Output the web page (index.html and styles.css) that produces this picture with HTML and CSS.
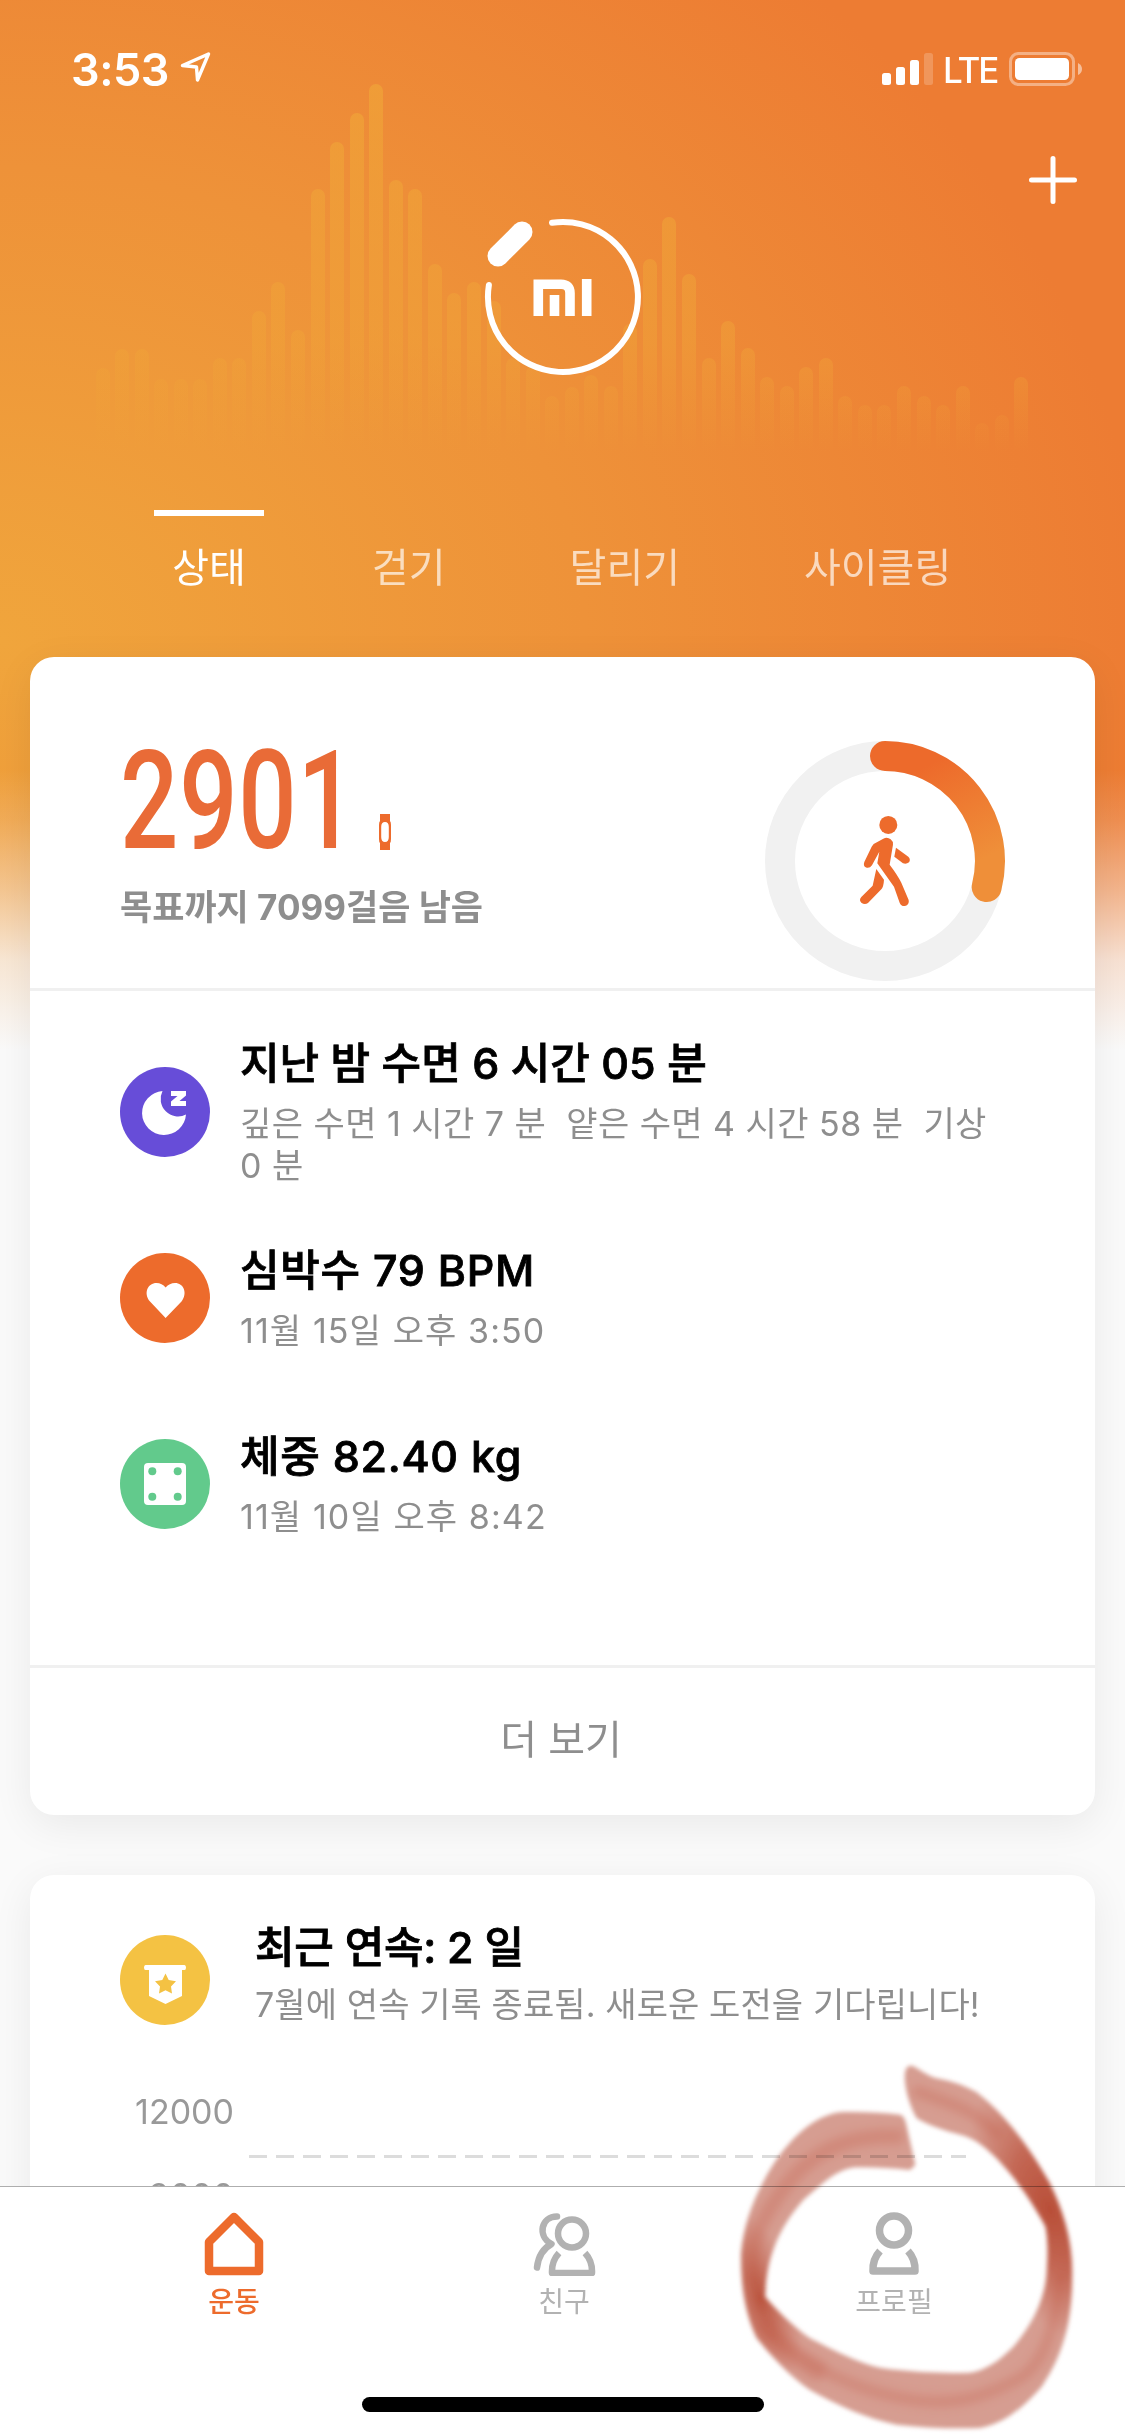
FILE: index.html
```html
<!DOCTYPE html>
<html lang="ko">
    <head>
        <meta charset="UTF-8">
        <meta name="viewport" content="width=device-width, initial-scale=1.0">
        <title>Mi Fit</title>
        <link rel="stylesheet" href="styles.css">
    </head>
    <body>
        <div class="screen">
            <div class="content">
                <svg class="bars" width="1125" height="460" viewBox="0 0 1125 460">
                    <defs>
                        <linearGradient id="barFade" gradientUnits="userSpaceOnUse" x1="0" y1="80" x2="0" y2="445">
                            <stop offset="0" stop-color="#f0a438" stop-opacity=".7"/>
                            <stop offset=".7" stop-color="#f0a438" stop-opacity=".45"/>
                            <stop offset="1" stop-color="#f0a438" stop-opacity="0"/>
                        </linearGradient>
                    </defs>
                    <path transform="translate(0 7)" fill="none" stroke="url(#barFade)" stroke-width="14" stroke-linecap="round" d="M103 368V445M122 349V445M142 349V445M161 379V445M181 379V445M200 379V445M220 358V445M239 358V445M259 311V445M278 282V445M298 330V445M318 189V445M337 142V445M357 113V445M376 84V445M396 180V445M415 189V445M435 264V445M454 293V445M474 282V445M494 301V445M513 358V445M533 366V445M552 396V445M572 387V445M591 375V445M611 386V445M630 324V445M650 259V445M669 217V445M689 274V445M709 358V445M728 321V445M748 348V445M767 377V445M787 386V445M806 367V445M826 358V445M845 396V445M865 405V445M884 405V445M904 386V445M924 396V445M943 405V445M963 386V445M982 423V445M1002 415V445M1021 377V445"/>
                </svg>

                <header class="header">
                    <div class="status">
                        <div class="status-left">
                            <span class="time">3:53</span>
                            <svg width="32" height="32" viewBox="0 0 32 32">
                                <path d="M2.5 13.5 28.5 2 17.5 28 16.5 15Z" fill="none" stroke="#fff" stroke-width="3.4" stroke-linejoin="round"/>
                            </svg>
                        </div>
                        <div class="status-right">
                            <svg width="52" height="34" viewBox="0 0 52 34" fill="#fff">
                                <rect x="0" y="21" width="9" height="12" rx="2.5"/>
                                <rect x="14" y="15" width="9" height="18" rx="2.5"/>
                                <rect x="28" y="8" width="9" height="25" rx="2.5"/>
                                <rect x="42" y="1" width="9" height="32" rx="2.5" opacity=".2"/>
                            </svg>
                            <span class="lte">LTE</span>
                            <svg width="74" height="34" viewBox="0 0 74 34">
                                <rect x="1.5" y="1.5" width="63" height="31" rx="8" fill="none" stroke="#fff" stroke-width="3" opacity=".4"/>
                                <rect x="6" y="6" width="54" height="22" rx="4.5" fill="#fff"/>
                                <path d="M69 11Q73 13 73 17Q73 21 69 23Z" fill="#fff" opacity=".5"/>
                            </svg>
                        </div>
                    </div>
                    <div class="add">
                        <svg width="48" height="48" viewBox="0 0 48 48">
                            <path d="M24 2.5V45.500M2.500 24H45.500" stroke="#fff" stroke-width="5" stroke-linecap="round"/>
                        </svg>
                    </div>
                    <div class="band">
                        <svg width="160" height="160" viewBox="0 0 160 160">
                            <path d="M69 5.800A75 75 0 1 1 5.900 68" fill="none" stroke="#fff" stroke-width="6" stroke-linecap="round"/>
                            <path d="M39 15 15 39" stroke="#fff" stroke-width="21" stroke-linecap="round"/>
                            <path d="M55.300 99V67.300H78Q87 67.300 87 76V99M71.500 78V99M103.700 62V99" fill="none" stroke="#fff" stroke-width="9.600"/>
                        </svg>
                    </div>
                    <nav class="tabs">
                        <span class="tab active">상태</span>
                        <span class="tab">걷기</span>
                        <span class="tab">달리기</span>
                        <span class="tab">사이클링</span>
                    </nav>
                </header>

                <section class="card">
                    <div class="summary">
                        <div>
                            <div class="steps">
                                <span class="count">2901</span>
                                <svg width="12" height="36" viewBox="0 0 12 36">
                                    <path fill="#ed6b2c" fill-rule="evenodd" d="M1 0H11V7Q12 8 12 11V25Q12 28 11 29V36H1V29Q0 28 0 25V11Q0 8 1 7ZM6 8Q2.200 8 2.200 13V23Q2.200 28 6 28Q9.800 28 9.800 23V13Q9.800 8 6 8Z"/>
                                </svg>
                            </div>
                            <p class="goal">목표까지 7099걸음 남음</p>
                        </div>
                        <svg class="progress" width="240" height="240" viewBox="0 0 240 240">
                            <defs>
                                <linearGradient id="ringFill" x1="0" y1="0" x2=".4" y2="1">
                                    <stop offset=".2" stop-color="#ed6a2b"/>
                                    <stop offset="1" stop-color="#ef8f39"/>
                                </linearGradient>
                            </defs>
                            <circle cx="120" cy="120" r="105" fill="none" stroke="#f1f1f1" stroke-width="30"/>
                            <path d="M120 15A105 105 0 0 1 221.700 146" fill="none" stroke="url(#ringFill)" stroke-width="30" stroke-linecap="round"/>
                            <g transform="translate(-65 -41) scale(.3333)" fill="#ed6b2c">
                                <circle cx="565" cy="375" r="27"/>
                                <path d="M521 432 550 416Q562 410 572 418Q580 424 579 434L569 494Q592 524 604 548L626 600Q629 614 615 618Q603 619 599 608L582 560 532 490 538 455 516 496Q508 507 497 502Q489 497 493 486L515 440Z"/>
                                <path d="M588 443 625 470Q633 478 627 487Q619 494 609 490L583 470Z"/>
                                <path d="M529 507 552 539Q551 560 544 568L504 609Q494 616 484 608Q476 600 484 591L518 557Z"/>
                            </g>
                        </svg>
                    </div>
                    <div class="records">
                        <div class="record">
                            <svg width="90" height="90" viewBox="0 0 90 90">
                                <circle cx="45" cy="45" r="45" fill="#674dd8"/>
                                <path fill="#fff" d="M42.500 24A22 22 0 1 0 66 47.500A17.500 17.500 0 0 1 42.500 24Z"/>
                                <path fill="#fff" d="M51 24H66V28.500L59.500 34H66V39H51V34.500L57.500 29H51Z"/>
                            </svg>
                            <div class="record-text">
                                <h2>지난 밤 수면 6 시간 05 분</h2>
                                <p>깊은 수면 1 시간 7 분&nbsp; 얕은 수면 4 시간 58 분&nbsp; 기상<br>0 분</p>
                            </div>
                        </div>
                        <div class="record">
                            <svg width="90" height="90" viewBox="0 0 90 90">
                                <circle cx="45" cy="45" r="45" fill="#ed6b2c"/>
                                <path fill="#fff" d="M45.600 65 30 48.500C23 40 28 30 36.500 30Q42 30 45.600 34.500Q49.500 30 55 30C63.500 30 68 40 61.500 48.500Z"/>
                            </svg>
                            <div class="record-text">
                                <h2 class="wide">심박수 79 BPM</h2>
                                <p class="wide">11월 15일 오후 3:50</p>
                            </div>
                        </div>
                        <div class="record">
                            <svg width="90" height="90" viewBox="0 0 90 90">
                                <circle cx="45" cy="45" r="45" fill="#62ca8c"/>
                                <rect x="24" y="24" width="42" height="42" rx="4" fill="#fff"/>
                                <g fill="#62ca8c">
                                    <circle cx="32.300" cy="32.300" r="4"/>
                                    <circle cx="57.700" cy="32.300" r="4"/>
                                    <circle cx="32.300" cy="57.700" r="4"/>
                                    <circle cx="57.700" cy="57.700" r="4"/>
                                </g>
                            </svg>
                            <div class="record-text">
                                <h2 class="wide">체중 82.40 kg</h2>
                                <p class="wide">11월 10일 오후 8:42</p>
                            </div>
                        </div>
                    </div>
                    <div class="more">더 보기</div>
                </section>

                <section class="card streak">
                    <div class="streak-head">
                        <svg width="90" height="90" viewBox="0 0 90 90">
                            <circle cx="45" cy="45" r="45" fill="#f4c243"/>
                            <path fill="#fff" d="M25.500 30H64.500Q66 30 66 32.500Q66 35 64.500 35H62V61L45.500 69 29 61V35H25.500Q24 35 24 32.500Q24 30 25.500 30Z"/>
                            <path fill="#f4c243" d="M45.500 38.500 48.700 45 56 46.200 51 51.500 52 58.500 45.500 55.300 39 58.500 40 51.500 35 46.200 42.300 45Z"/>
                        </svg>
                        <div class="record-text">
                            <h2>최근 연속: 2 일</h2>
                            <p>7월에 연속 기록 종료됨. 새로운 도전을 기다립니다!</p>
                        </div>
                    </div>
                    <div class="chart">
                        <div class="axis">
                            <span>12000</span>
                            <span>9000</span>
                        </div>
                        <svg class="grid-line" width="717" height="3">
                            <path d="M0 1.500H717" stroke="#dcdcdc" stroke-width="3" stroke-dasharray="18 9"/>
                        </svg>
                    </div>
                </section>
            </div>

            <footer class="tabbar">
                <nav class="menu">
                    <div class="menu-item selected">
                        <svg width="64" height="64" viewBox="0 0 64 64">
                            <path d="M32 5 57 30V59H7V30Z" fill="none" stroke="#ed6b2c" stroke-width="8.500" stroke-linejoin="round"/>
                        </svg>
                        <span>운동</span>
                    </div>
                    <div class="menu-item">
                        <svg width="64" height="64" viewBox="0 0 64 64" fill="none" stroke="#b2b2b2" stroke-width="6.500">
                            <circle cx="40" cy="21.500" r="14"/>
                            <path d="M27 41Q19.500 49 20 61H60Q60.500 49 53 41" stroke-linejoin="round"/>
                            <path d="M25 4.500C9 4.500 5 24 19.500 32C10 37 6 47 5 55.500" stroke-linecap="round" stroke-linejoin="round"/>
                        </svg>
                        <span>친구</span>
                    </div>
                    <div class="menu-item">
                        <svg width="64" height="64" viewBox="0 0 64 64" fill="none" stroke="#b2b2b2" stroke-width="7.500">
                            <circle cx="32" cy="18.500" r="14.500"/>
                            <path d="M18 39Q10.500 47 11 59H53Q53.500 47 46 39" stroke-linejoin="round"/>
                        </svg>
                        <span>프로필</span>
                    </div>
                </nav>
                <div class="home-bar"></div>
            </footer>

            <!-- marker circle around the profile tab -->
            <svg class="marker" width="445" height="396" viewBox="0 0 1335 1188">
                <defs>
                    <radialGradient id="darkRight" gradientUnits="userSpaceOnUse" cx="0" cy="0" r="1" gradientTransform="translate(1110 510) rotate(70) scale(420 210)">
                        <stop offset="0" stop-color="#b5452d" stop-opacity=".9"/>
                        <stop offset=".45" stop-color="#b94a33" stop-opacity=".65"/>
                        <stop offset="1" stop-color="#c05a45" stop-opacity="0"/>
                    </radialGradient>
                    <radialGradient id="darkLeft" gradientUnits="userSpaceOnUse" cx="0" cy="0" r="1" gradientTransform="translate(240 775) rotate(75) scale(260 110)">
                        <stop offset="0" stop-color="#b5452d" stop-opacity=".85"/>
                        <stop offset="1" stop-color="#c05a45" stop-opacity="0"/>
                    </radialGradient>
                    <filter id="soft"><feGaussianBlur stdDeviation="6"/></filter>
                    <filter id="softer"><feGaussianBlur stdDeviation="13"/></filter>
                    <path id="ribbon" d="M690 77C710 77 725 100 770 115C820 125 850 135 890 157C980 225 1060 340 1110 430C1150 510 1176 600 1177 690C1178 820 1160 930 1085 1040C1040 1090 980 1150 900 1164Q770 1168 650 1154C560 1135 480 1100 390 1050C330 1010 280 955 230 895C195 820 182 740 183 640C190 560 215 490 250 425C310 310 400 220 490 216Q580 214 660 224Q672 226 678 250L706 375 690 390Q600 380 530 382C470 385 430 430 370 480C300 560 258 650 256 770C290 810 340 860 390 895C460 930 550 980 630 988Q750 1002 870 998C920 990 960 960 1000 920C1060 850 1098 770 1100 690Q1106 610 1096 560C1060 490 980 370 900 312C850 275 800 285 710 235C690 200 675 150 674 110Q674 80 690 77Z"/>
                    <clipPath id="inside"><use href="#ribbon"/></clipPath>
                </defs>
                <g filter="url(#soft)">
                    <use href="#ribbon" fill="#d69d91"/>
                    <g clip-path="url(#inside)">
                        <g fill="none" stroke="#c86b5b" stroke-opacity=".4" filter="url(#softer)">
                            <path d="M700 150C800 190 880 200 960 290" stroke-width="35"/>
                            <path d="M670 290C520 280 400 320 300 460S215 650 220 730" stroke-width="45"/>
                            <path d="M260 870C400 1000 560 1060 700 1080S930 1060 1010 1020S1130 860 1140 700" stroke-width="32"/>
                            <path d="M250 840C290 910 350 960 430 1000" stroke-width="60"/>
                        </g>
                        <use href="#ribbon" fill="url(#darkRight)"/>
                        <use href="#ribbon" fill="url(#darkLeft)"/>
                    </g>
                </g>
            </svg>
        </div>
    </body>
</html>
```

FILE: styles.css
```css
*{
    margin: 0;
    padding: 0;
    box-sizing: border-box;
}
body{
    font-family: Inter, "Noto Sans CJK KR", sans-serif;
    background: #fafafa;
}
svg{
    display: block;
    flex-shrink: 0;
}
.screen{
    position: relative;
    display: flex;
    flex-direction: column;
    width: 1125px;
    height: 2436px;
    overflow: hidden;
}
.content{
    position: relative;
    flex: 1;
    min-height: 0;
    overflow: hidden;
    background:
        linear-gradient(rgba(250, 250, 250, 0) 770px, rgba(250, 250, 250, .15) 820px, rgba(250, 250, 250, .45) 890px, rgba(250, 250, 250, .8) 960px, #fafafa 1050px),
        radial-gradient(1300px 1050px at 0 640px, #f0a53c, #ee9239 45%, #ed7c33 88%);
}
.bars{
    position: absolute;
    top: 0;
    left: 0;
}

/* header */
.header{
    position: relative;
    height: 657px;
    color: #fff;
}
.status{
    display: flex;
    justify-content: space-between;
    align-items: center;
    height: 138px;
    padding: 0 42px 0 71px;
}
.status-left,
.status-right{
    display: flex;
    align-items: center;
}
.status-left{
    gap: 11px;
}
.time{
    font-size: 45px;
    font-weight: 600;
    letter-spacing: -.5px;
}
.status-left svg{
    margin-top: -2px;
}
.lte{
    width: 64px;
    padding-left: 9px;
    margin-right: 11px;
    font-size: 35px;
    font-weight: 500;
    letter-spacing: -2px;
    line-height: 34px;
    padding-top: 2px;
}
.add{
    display: flex;
    justify-content: flex-end;
    padding: 18px 48px 0 0;
}
.band{
    display: flex;
    justify-content: center;
    padding-left: 1px;
    margin-top: 13px;
}
.tabs{
    display: flex;
    gap: 126px;
    padding: 133px 0 0 172px;
}
.tab{
    display: flex;
    flex-direction: column;
    align-items: center;
    font-size: 40px;
    line-height: 60px;
    padding-top: 28px;
    color: rgba(255, 255, 255, .68);
}
.tab.active{
    padding-top: 0;
    color: #fff;
}
.tab.active::before{
    content: "";
    width: 110px;
    height: 6px;
    margin: 0 -18px 22px;
    background: #fff;
}
.tab:nth-child(n+3){
    margin-left: -2px;
}

/* cards */
.card{
    position: relative;
    margin: 0 30px;
    background: #fff;
    border-radius: 24px;
    box-shadow: 0 10px 40px rgba(0, 0, 0, .07);
}
.summary{
    display: flex;
    justify-content: space-between;
    height: 334px;
    padding: 84px 90px 0 90px;
    border-bottom: 3px solid #f0f0f0;
}
.steps{
    display: flex;
    align-items: flex-end;
    height: 109px;
}
.count{
    width: 259px;
    font-family: Roboto, sans-serif;
    font-size: 137px;
    font-weight: 500;
    letter-spacing: 1px;
    line-height: 97px;
    color: #e96b37;
    transform: scaleX(.75);
    transform-origin: 0 0;
}
.goal{
    margin-top: 32px;
    font-size: 35px;
    font-weight: 700;
    line-height: 50px;
    color: #8e8e8e;
}
.records{
    padding: 28px 90px 88px;
}
.record{
    display: flex;
    align-items: center;
    gap: 30px;
    height: 186px;
}
.record-text{
    margin-top: -5px;
}
h2{
    font-size: 43px;
    font-weight: 500;
    line-height: 60px;
    color: #000;
    white-space: nowrap;
    -webkit-text-stroke: .8px #000;
}
h2.wide{
    letter-spacing: .7px;
}
.record-text p{
    margin-top: 10px;
    font-size: 34px;
    letter-spacing: .45px;
    line-height: 42px;
    color: #8e8e8e;
    white-space: nowrap;
}
.record-text p.wide{
    letter-spacing: 1.1px;
}
.more{
    height: 150px;
    padding-right: 3px;
    border-top: 3px solid #f0f0f0;
    font-size: 40px;
    line-height: 144px;
    text-align: center;
    color: #8e8e8e;
}
.streak{
    height: 500px;
    margin-top: 60px;
}
.streak-head{
    display: flex;
    align-items: center;
    gap: 45px;
    height: 210px;
    padding: 0 90px;
}
.streak-head .record-text{
    margin-top: -18px;
}
.streak-head h2{
    letter-spacing: -.3px;
}
.streak-head .record-text p{
    margin-top: 7px;
    letter-spacing: .1px;
}
.chart{
    display: flex;
    gap: 15px;
    padding: 0 90px;
}
.axis{
    display: flex;
    flex-direction: column;
    gap: 44px;
    width: 114px;
    padding-top: 7px;
    text-align: right;
    font-size: 34px;
    line-height: 40px;
    color: #999;
}
.grid-line{
    margin-top: 70px;
}

/* bottom bar */
.tabbar{
    position: relative;
    height: 250px;
    border-top: 1px solid #aeaeae;
    background: #fff;
}
.menu{
    display: flex;
    padding: 25px 66px 0 69px;
}
.menu-item{
    display: flex;
    flex: 1;
    flex-direction: column;
    align-items: center;
    font-size: 28px;
    line-height: 40px;
    color: #b2b2b2;
}
.menu-item span{
    margin-top: 6px;
}
.menu-item.selected{
    font-weight: 500;
    color: #ed6b2c;
}
.home-bar{
    width: 402px;
    height: 15px;
    margin: 75px auto 0;
    border-radius: 8px;
    background: #000;
}
.marker{
    position: absolute;
    left: 680px;
    top: 2040px;
    mix-blend-mode: multiply;
}
```
